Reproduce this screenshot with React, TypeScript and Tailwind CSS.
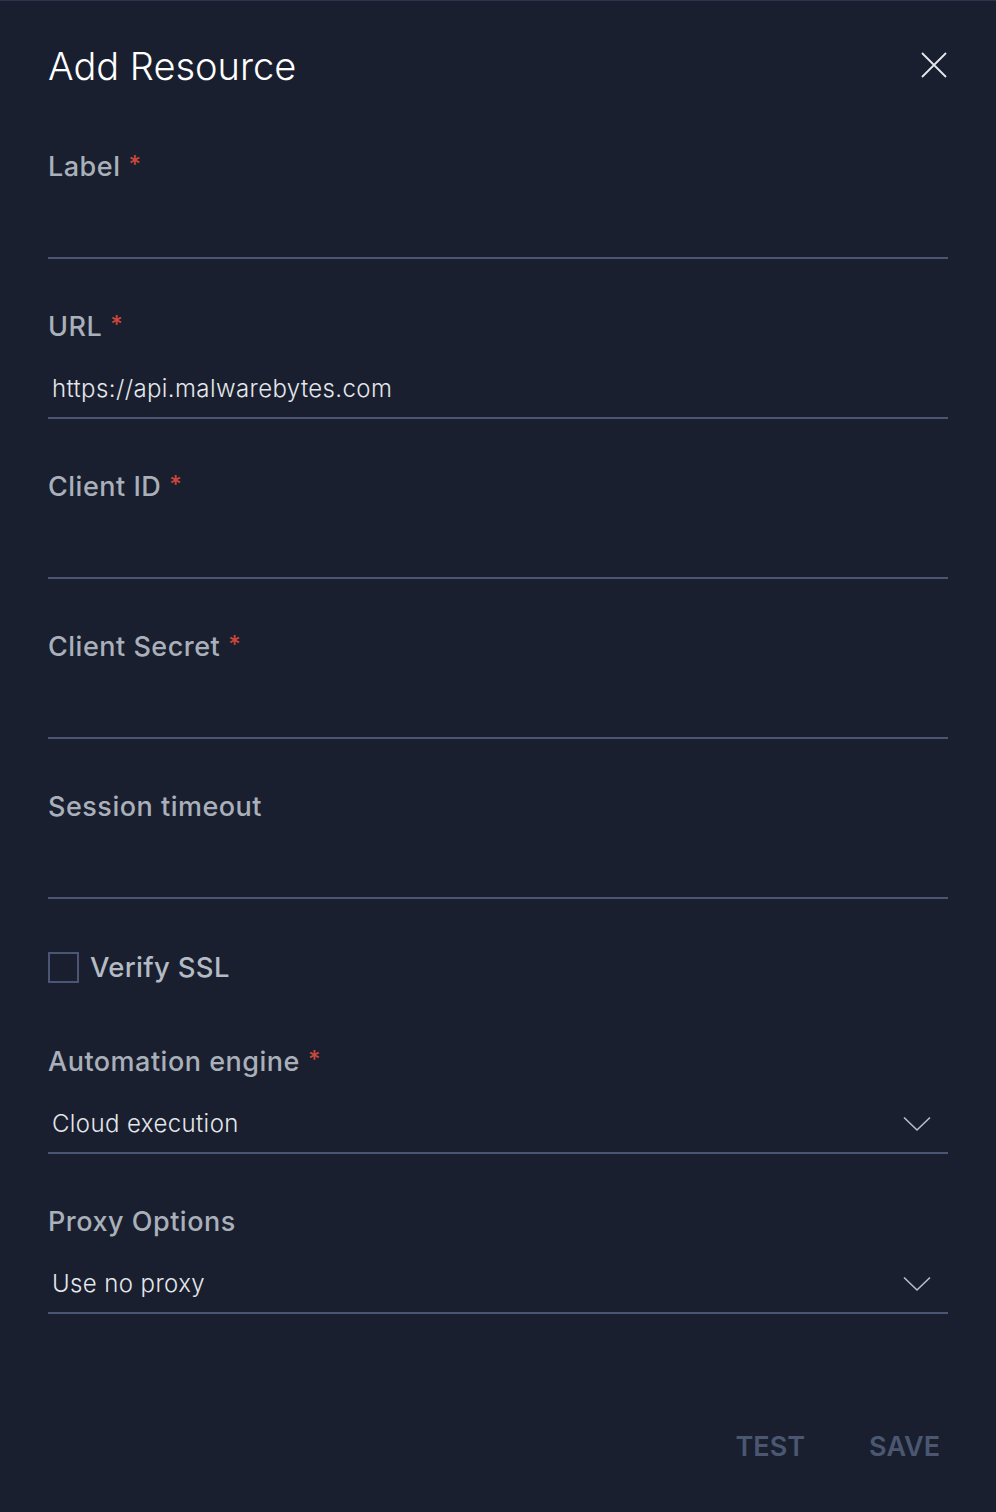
import React from 'react';

const font = { fontFamily: 'Inter, "Open Sans", sans-serif' };

type Field = {
  label: string;
  required?: boolean;
  value?: string;
  select?: boolean;
};

const textFields: Field[] = [
  { label: 'Label', required: true },
  { label: 'URL', required: true, value: 'https://api.malwarebytes.com' },
  { label: 'Client ID', required: true },
  { label: 'Client Secret', required: true },
  { label: 'Session timeout' },
];

const selectFields: Field[] = [
  { label: 'Automation engine', required: true, value: 'Cloud execution', select: true },
  { label: 'Proxy Options', value: 'Use no proxy', select: true },
];

function Chevron() {
  return (
    <svg width="28" height="16" viewBox="0 0 28 16" fill="none" className="mr-[17px]">
      <path d="M1 1.5 L14 14 L27 1.5" stroke="#b9bfc9" strokeWidth="1.6" />
    </svg>
  );
}

function FormField({ f }: { f: Field }) {
  return (
    <div className="mb-[50px]">
      <div className="flex h-[36px] items-center text-[27px] font-medium tracking-[0.5px] text-[#a9b0ba]">
        {f.label}
        {f.required && <span className="ml-[8px] -mt-[4px] text-[24px] text-[#c9483b]">*</span>}
      </div>
      <div className="flex h-[74px] items-start justify-between border-b-2 border-[#4a5673] pt-[28px]">
        <span className="pl-1 text-[24px] font-light leading-[32px] tracking-[0.4px] text-[#e4e7eb]">
          {f.value ?? ''}
        </span>
        {f.select && <div className="pt-[8px]"><Chevron /></div>}
      </div>
    </div>
  );
}

export default function App() {
  return (
    <div style={font} className="min-h-[1512px] w-[996px] border-t border-[#2a3550] bg-[#191f2f]">
      <div className="px-12">
        <div className="flex items-start justify-between pt-[41px]">
          <h1 className="text-[38px] font-light leading-[48px] text-white">Add Resource</h1>
          <button className="mt-[10px] mr-[1px]" aria-label="Close">
            <svg width="26" height="26" viewBox="0 0 26 26" fill="none">
              <path d="M1 1 L25 25 M25 1 L1 25" stroke="#e6e8ec" strokeWidth="1.8" />
            </svg>
          </button>
        </div>

        <div className="mt-[59px]">
          {textFields.map((f) => (
            <FormField key={f.label} f={f} />
          ))}
        </div>

        <div className="mb-[61px] pt-[3px]">
          <label className="flex h-[31px] items-center gap-[11px]">
            <span className="h-[31px] w-[31px] border-2 border-[#4a5673]" />
            <span className="text-[27.5px] font-medium leading-[31px] tracking-[0.3px] text-[#b4bbc4]">Verify SSL</span>
          </label>
        </div>

        {selectFields.map((f) => (
          <FormField key={f.label} f={f} />
        ))}

        <div className="mt-[113px] flex justify-end gap-[64px] pr-2">
          <button className="text-[27px] font-semibold leading-[40px] text-[#4b5770]">TEST</button>
          <button className="text-[27px] font-semibold leading-[40px] text-[#4b5770]">SAVE</button>
        </div>
      </div>
    </div>
  );
}
